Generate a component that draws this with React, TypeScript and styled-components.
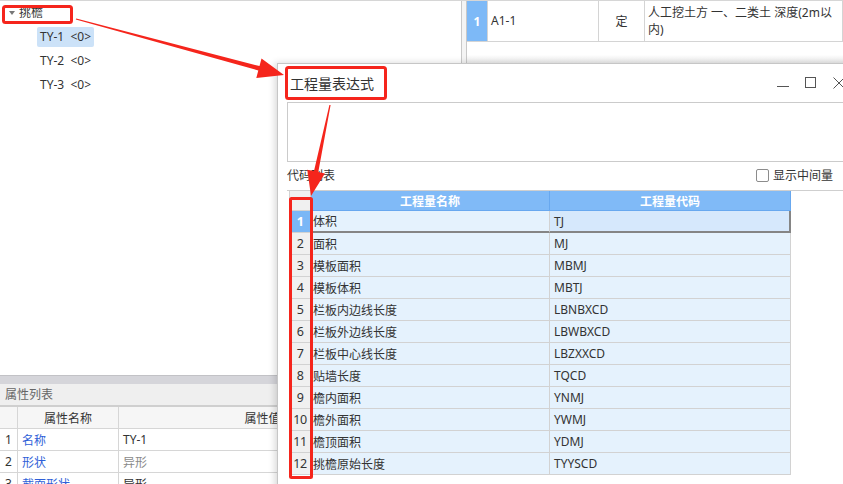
import React from "react";
import styled, { createGlobalStyle } from "styled-components";

const GlobalStyle = createGlobalStyle`
  html, body { margin: 0; padding: 0; background: #fff; }
  body {
    width: 843px; height: 484px; overflow: hidden;
    font-family: "Noto Sans", "Noto Sans CJK SC", "Microsoft YaHei", sans-serif;
    font-size: 12px; color: #333;
  }
  * { box-sizing: border-box; }
`;

const Screen = styled.div`
  position: relative;
  width: 843px;
  height: 484px;
  overflow: hidden;
  display: flex;
  border-top: 1px solid #d6d6d6;
  background: #fff;
`;

/* ---------- left pane ---------- */
const LeftPane = styled.div`
  width: 462px;
  flex: none;
  display: flex;
  flex-direction: column;
  border-right: 1px solid #c8c8c8;
`;

const TreeArea = styled.div`
  flex: 1;
  min-height: 0;
`;

const TreeRow = styled.div<{ $indent: number }>`
  height: 24px;
  display: flex;
  align-items: center;
  padding-left: ${(p) => p.$indent}px;
  white-space: nowrap;
`;

const Caret = styled.span`
  width: 0;
  height: 0;
  border-left: 3px solid transparent;
  border-right: 3px solid transparent;
  border-top: 4px solid #777;
  margin-right: 1px;
`;

const TreeLabel = styled.span<{ $selected?: boolean }>`
  display: inline-block;
  height: 20px;
  line-height: 20px;
  padding: 0 3px;
  border-radius: 2px;
  color: #333;
  font-size: 12px;
  white-space: pre;
  background: ${(p) => (p.$selected ? "#cce2f8" : "transparent")};
`;

const PropPanel = styled.div`
  height: 109px;
  flex: none;
  overflow: hidden;
`;

const PropSplit = styled.div`
  height: 9px;
  background: #d5d5da;
  border-top: 1px solid #c2c2c6;
`;

const PropTitle = styled.div`
  height: 23px;
  line-height: 21px;
  padding-left: 5px;
  background: #efefef;
  border-bottom: 2px solid #cfcfcf;
  color: #666;
  font-size: 12px;
`;

const PropTable = styled.div`
  display: grid;
  grid-template-columns: 18px 101px 288px 1fr;
  grid-auto-rows: 22px;
`;

const PropCell = styled.div<{ $head?: boolean; $tone?: "link" | "muted" | "plain"; $center?: boolean }>`
  border-right: 1px solid #d6d6d6;
  border-bottom: 1px solid #d6d6d6;
  background: ${(p) => (p.$head ? "#f6f6f6" : "#fff")};
  display: flex;
  align-items: center;
  justify-content: ${(p) => (p.$center ? "center" : "flex-start")};
  padding-left: ${(p) => (p.$center ? 0 : 4)}px;
  white-space: nowrap;
  overflow: hidden;
  color: ${(p) => (p.$tone === "link" ? "#2f5fd8" : p.$tone === "muted" ? "#8a8a8a" : "#333")};
`;

/* ---------- splitter ---------- */
const Splitter = styled.div`
  width: 5px;
  flex: none;
  background: linear-gradient(#f4f4f4 80%, #e6e6e6);
  border-right: 1px solid #c8c8c8;
`;

/* ---------- right pane ---------- */
const RightPane = styled.div`
  flex: 1;
  display: flex;
  flex-direction: column;
`;

const DataRow = styled.div`
  display: grid;
  grid-template-columns: 21px 111px 46px 1fr;
  height: 41px;
  flex: none;
`;

const DataCell = styled.div<{ $num?: boolean; $center?: boolean }>`
  border-right: 1px solid #d4d4d4;
  border-bottom: 1px solid #d4d4d4;
  background: ${(p) => (p.$num ? "#7db9f7" : "#fff")};
  color: ${(p) => (p.$num ? "#fff" : "#333")};
  font-weight: ${(p) => (p.$num ? 700 : 400)};
  display: flex;
  align-items: ${(p) => (p.$center || p.$num ? "center" : "flex-start")};
  justify-content: ${(p) => (p.$center || p.$num ? "center" : "flex-start")};
  padding: ${(p) => (p.$center || p.$num ? "0" : "3px 4px 0 3px")};
  line-height: 17px;
  font-size: 12px;
`;

const DataText = styled.div<{ $pt?: number }>`
  padding-top: ${(p) => p.$pt ?? 0}px;
`;

const PaneFiller = styled.div`
  height: 22px;
  flex: none;
  background: linear-gradient(#fff 60%, #ececec);
  border-bottom: 1px solid #c6c6c6;
`;

/* ---------- dialog ---------- */
const Dialog = styled.div`
  position: absolute;
  left: 277px;
  top: 62px;
  width: 581px;
  height: 440px;
  background: #fff;
  border: 1px solid #c6c6c6;
  box-shadow: -2px 0 7px rgba(0, 0, 0, 0.16);
  display: flex;
  flex-direction: column;
`;

const TitleBar = styled.div`
  height: 38px;
  flex: none;
  display: flex;
  align-items: center;
  justify-content: space-between;
  padding: 0 4px 0 12px;
`;

const TitleText = styled.div`
  font-family: "Noto Sans CJK SC", sans-serif;
  font-size: 14px;
  color: #333;
`;

const WinButtons = styled.div`
  display: flex;
`;

const WinButton = styled.div`
  width: 28px;
  height: 28px;
  display: flex;
  align-items: center;
  justify-content: center;
`;

const DialogBody = styled.div`
  flex: 1;
  padding-left: 9px;
  display: flex;
  flex-direction: column;
`;

const ExprBox = styled.div`
  height: 60px;
  flex: none;
  border: 1px solid #cbcbcb;
  border-right: none;
`;

const LabelRow = styled.div`
  height: 28px;
  flex: none;
  display: flex;
  align-items: center;
  justify-content: space-between;
  padding-right: 24px;
  padding-bottom: 2px;
  color: #333;
`;

const CheckWrap = styled.label`
  display: flex;
  align-items: center;
  gap: 4px;
  font-size: 12px;
  color: #333;
`;

const CheckBox = styled.span`
  width: 13px;
  height: 13px;
  border: 1px solid #8c8c8c;
  border-radius: 2px;
  background: #fff;
`;

const GridPanel = styled.div`
  border-top: 1px solid #cfcfcf;
  padding-left: 2px;
  flex: none;
`;

const Grid = styled.div`
  display: grid;
  grid-template-columns: 21px 239px 241px;
  grid-template-rows: 20px;
  grid-auto-rows: 22px;
  width: 501px;
  border-left: 1px solid #d2d2d2;
`;

const HeadCell = styled.div<{ $corner?: boolean }>`
  background: ${(p) => (p.$corner ? "#f0f0f0" : "#80baf7")};
  border-right: 1px solid ${(p) => (p.$corner ? "#d2d2d2" : "#68a8ef")};
  border-bottom: 1px solid ${(p) => (p.$corner ? "#d2d2d2" : "#68a8ef")};
  color: #fff;
  font-weight: 700;
  display: flex;
  align-items: center;
  justify-content: center;
`;

const NumCell = styled.div<{ $active?: boolean }>`
  background: ${(p) => (p.$active ? "#7ab7f6" : "#f0f0f0")};
  color: ${(p) => (p.$active ? "#fff" : "#333")};
  font-weight: ${(p) => (p.$active ? 700 : 400)};
  border-right: 1px solid #d2d2d2;
  border-bottom: 1px solid #d2d2d2;
  display: flex;
  align-items: center;
  justify-content: center;
  font-size: 12.5px;
  letter-spacing: -0.5px;
`;

const BodyCell = styled.div<{ $active?: boolean; $focus?: boolean; $pad: number }>`
  background: ${(p) => (p.$focus ? "#d6e8fc" : "#e5f2fd")};
  border-right: ${(p) => (p.$focus ? "2px solid #858585" : "1px solid #d2d2d2")};
  border-bottom: ${(p) => (p.$active ? "2px solid #858585" : "1px solid #d2d2d2")};
  display: flex;
  align-items: center;
  padding-left: ${(p) => p.$pad}px;
  color: #333;
  white-space: nowrap;
`;

/* ---------- annotations ---------- */
const Overlay = styled.svg`
  position: absolute;
  left: 0;
  top: 0;
  width: 843px;
  height: 484px;
  pointer-events: none;
`;

const rows: [string, string][] = [
  ["体积", "TJ"],
  ["面积", "MJ"],
  ["模板面积", "MBMJ"],
  ["模板体积", "MBTJ"],
  ["栏板内边线长度", "LBNBXCD"],
  ["栏板外边线长度", "LBWBXCD"],
  ["栏板中心线长度", "LBZXXCD"],
  ["贴墙长度", "TQCD"],
  ["檐内面积", "YNMJ"],
  ["檐外面积", "YWMJ"],
  ["檐顶面积", "YDMJ"],
  ["挑檐原始长度", "TYYSCD"],
];

const props: [string, string, "plain" | "muted"][] = [
  ["名称", "TY-1", "plain"],
  ["形状", "异形", "muted"],
  ["截面形状", "异形", "plain"],
];

function arrow(sx: number, sy: number, tx: number, ty: number, headLen: number, headW: number, shaftW: number) {
  const dx = tx - sx;
  const dy = ty - sy;
  const len = Math.hypot(dx, dy);
  const ux = dx / len;
  const uy = dy / len;
  const nx = -uy;
  const ny = ux;
  const bx = tx - ux * headLen;
  const by = ty - uy * headLen;
  const pts = [
    [sx + nx * 0.6, sy + ny * 0.6],
    [bx + nx * shaftW, by + ny * shaftW],
    [bx + nx * headW, by + ny * headW],
    [tx, ty],
    [bx - nx * headW, by - ny * headW],
    [bx - nx * shaftW, by - ny * shaftW],
    [sx - nx * 0.6, sy - ny * 0.6],
  ];
  return pts.map((p) => `${p[0].toFixed(1)},${p[1].toFixed(1)}`).join(" ");
}

export default function App() {
  return (
    <>
      <GlobalStyle />
      <Screen>
        <LeftPane>
          <TreeArea>
            <TreeRow $indent={9}>
              <Caret />
              <TreeLabel>挑檐</TreeLabel>
            </TreeRow>
            <TreeRow $indent={37}>
              <TreeLabel $selected>{"TY-1  <0>"}</TreeLabel>
            </TreeRow>
            <TreeRow $indent={37}>
              <TreeLabel>{"TY-2  <0>"}</TreeLabel>
            </TreeRow>
            <TreeRow $indent={37}>
              <TreeLabel>{"TY-3  <0>"}</TreeLabel>
            </TreeRow>
          </TreeArea>
          <PropPanel>
            <PropSplit />
            <PropTitle>属性列表</PropTitle>
            <PropTable>
              <PropCell $head $center />
              <PropCell $head $center>属性名称</PropCell>
              <PropCell $head $center>属性值</PropCell>
              <PropCell $head $center />
              {props.map(([name, value, tone], i) => (
                <React.Fragment key={name}>
                  <PropCell $center>{i + 1}</PropCell>
                  <PropCell $tone="link">{name}</PropCell>
                  <PropCell $tone={tone}>{value}</PropCell>
                  <PropCell />
                </React.Fragment>
              ))}
            </PropTable>
          </PropPanel>
        </LeftPane>
        <Splitter />
        <RightPane>
          <DataRow>
            <DataCell $num>1</DataCell>
            <DataCell>
              <DataText $pt={8}>A1-1</DataText>
            </DataCell>
            <DataCell $center>定</DataCell>
            <DataCell>人工挖土方 一、二类土 深度(2m以内)</DataCell>
          </DataRow>
          <PaneFiller />
        </RightPane>

        <Dialog>
          <TitleBar>
            <TitleText>工程量表达式</TitleText>
            <WinButtons>
              <WinButton>
                <svg width="14" height="14" viewBox="0 0 14 14">
                  <line x1="1" y1="10.5" x2="13" y2="10.5" stroke="#555" strokeWidth="1" />
                </svg>
              </WinButton>
              <WinButton>
                <svg width="14" height="14" viewBox="0 0 14 14">
                  <rect x="1.5" y="1.5" width="10" height="10" fill="none" stroke="#555" strokeWidth="1" />
                </svg>
              </WinButton>
              <WinButton>
                <svg width="14" height="14" viewBox="0 0 14 14">
                  <path d="M1.5 1.5 L12.5 12.5 M12.5 1.5 L1.5 12.5" stroke="#555" strokeWidth="1" fill="none" />
                </svg>
              </WinButton>
            </WinButtons>
          </TitleBar>
          <DialogBody>
            <ExprBox />
            <LabelRow>
              <span>代码列表</span>
              <CheckWrap>
                <CheckBox />
                显示中间量
              </CheckWrap>
            </LabelRow>
            <GridPanel>
              <Grid>
                <HeadCell $corner />
                <HeadCell>工程量名称</HeadCell>
                <HeadCell>工程量代码</HeadCell>
                {rows.map(([name, code], i) => (
                  <React.Fragment key={code}>
                    <NumCell $active={i === 0}>{i + 1}</NumCell>
                    <BodyCell $active={i === 0} $pad={2}>
                      {name}
                    </BodyCell>
                    <BodyCell $active={i === 0} $focus={i === 0} $pad={4}>
                      {code}
                    </BodyCell>
                  </React.Fragment>
                ))}
              </Grid>
            </GridPanel>
          </DialogBody>
        </Dialog>

        <Overlay viewBox="0 0 843 484">
          <g fill="none" stroke="#f5251c" strokeWidth="3" strokeLinejoin="round">
            <rect x="3.5" y="5.5" width="68" height="16" rx="2" />
            <rect x="286.5" y="66.5" width="99" height="31" rx="2" />
            <rect x="290.5" y="197.5" width="21" height="279" rx="1" />
          </g>
          <g fill="#f5251c">
            <polygon points={arrow(76, 18, 284, 74, 26, 10, 2.2)} />
            <polygon points={arrow(330, 104, 311, 195, 25, 9, 2.2)} />
          </g>
        </Overlay>
      </Screen>
    </>
  );
}
